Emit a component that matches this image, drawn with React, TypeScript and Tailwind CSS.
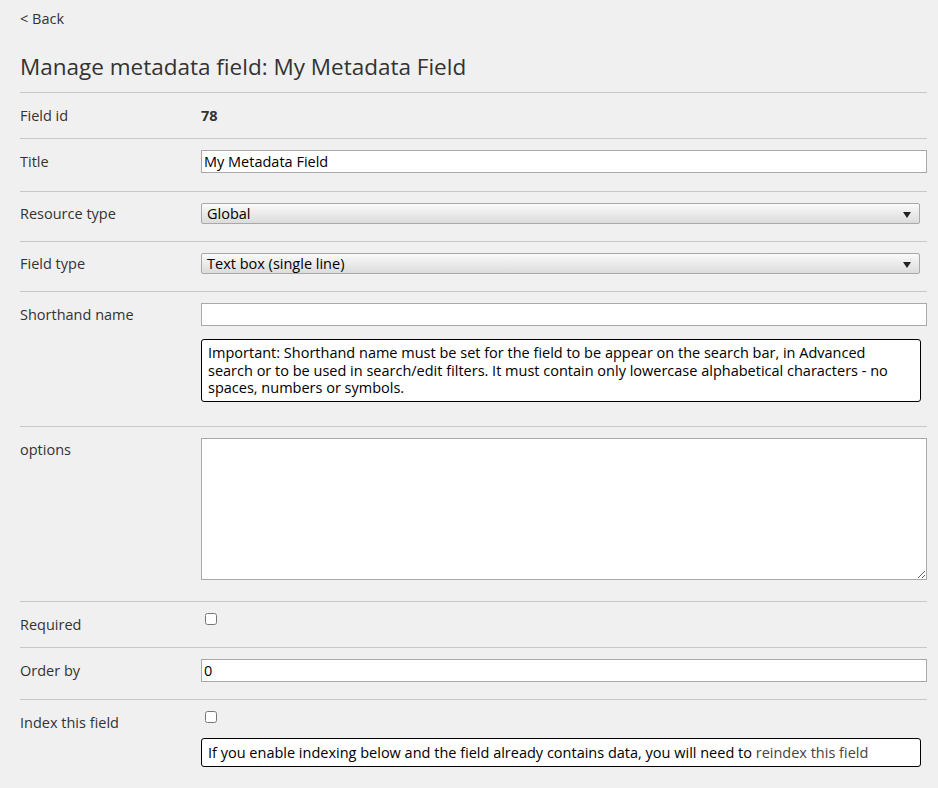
import React from "react";

const Caret = () => (
  <svg width="8" height="6" viewBox="0 0 8 6" className="absolute right-[8px] top-[8px]"><path d="M0 0h8L4 6z" fill="#222" /></svg>
);

function Row({ label, children, pb, labelH = 23 }: { label: string; children: React.ReactNode; pb: string; labelH?: number }) {
  return (
    <div className={`flex border-t border-[#c8c8c8] pt-[11px] ${pb}`}>
      <div className="w-[181px] shrink-0 flex items-center text-[14.5px] text-[#333]" style={{ height: labelH }}>{label}</div>
      <div className="flex-1">{children}</div>
    </div>
  );
}

const inputCls = "block w-full h-[23px] border border-[#a9a9a9] bg-white px-[2px] text-[14.5px] text-black outline-none";

export default function App() {
  return (
    <div className="min-h-[788px] bg-[#f0f0f0] pl-[20px] pr-[11px] pt-[9px] text-[#333]" style={{ fontFamily: '"Open Sans", "Noto Sans", sans-serif' }}>
      <div className="text-[14.5px] leading-[20px]">&lt; Back</div>
      <h1 className="mt-[25px] mb-[12px] text-[22.5px] leading-[26px] text-[#333]">Manage metadata field: My Metadata Field</h1>
      <div>
        <Row label="Field id" pb="pb-[11px]">
          <div className="h-[23px] flex items-center font-bold text-[14.5px]">78</div>
        </Row>
        <Row label="Title" pb="pb-[18px]">
          <input className={inputCls} defaultValue="My Metadata Field" />
        </Row>
        <Row label="Resource type" labelH={21} pb="pb-[17px]">
          <div className="relative h-[21px] w-[719px] border border-[#a9a9a9] rounded-[2px] bg-gradient-to-b from-[#fafafa] to-[#dcdcdc] px-[5px] text-[14.5px] text-black leading-[19px]">Global<Caret /></div>
        </Row>
        <Row label="Field type" labelH={21} pb="pb-[17px]">
          <div className="relative h-[21px] w-[719px] border border-[#a9a9a9] rounded-[2px] bg-gradient-to-b from-[#fafafa] to-[#dcdcdc] px-[5px] text-[14.5px] text-black leading-[19px]">Text box (single line)<Caret /></div>
        </Row>
        <Row label="Shorthand name" pb="pb-[24px]">
          <input className={inputCls} />
          <div className="mt-[13px] h-[63px] w-[720px] border border-black rounded-[3px] bg-white px-[6px] py-[4px] text-[14.5px] leading-[17.5px] text-black">
            Important: Shorthand name must be set for the field to be appear on the search bar, in Advanced search or to be used in search/edit filters. It must contain only lowercase alphabetical characters - no spaces, numbers or symbols.
          </div>
        </Row>
        <Row label="options" pb="pb-[21px]">
          <textarea className="block w-full h-[142px] border border-[#a9a9a9] bg-white resize-y" />
        </Row>
        <Row label="Required" pb="pb-[11px]">
          <div className="h-[23px]"><input type="checkbox" className="block m-0 ml-[4px] w-[12px] h-[12px]" /></div>
        </Row>
        <Row label="Order by" pb="pb-[17px]">
          <input className={inputCls} defaultValue="0" />
        </Row>
        <Row label="Index this field" pb="pb-[20px]">
          <div className="h-[14px]"><input type="checkbox" className="block m-0 ml-[4px] w-[12px] h-[12px]" /></div>
          <div className="mt-[13px] h-[29px] w-[720px] border border-black rounded-[3px] bg-white px-[6px] text-[14.5px] leading-[27px] text-black whitespace-nowrap overflow-hidden">
            If you enable indexing below and the field already contains data, you will need to <span className="text-[#444]">reindex this field</span>
          </div>
        </Row>
      </div>
    </div>
  );
}
